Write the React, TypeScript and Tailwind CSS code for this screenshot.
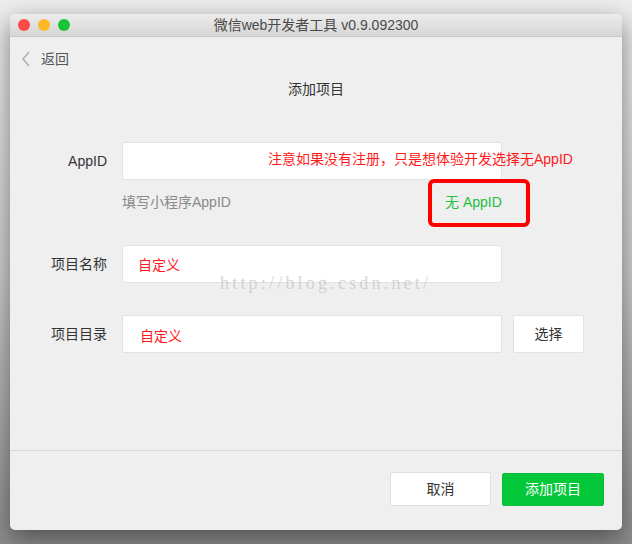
import React from "react";

const font = { fontFamily: '"Liberation Sans", "Noto Sans CJK SC", sans-serif' };

export default function App() {
  return (
    <div
      className="w-[632px] h-[544px] overflow-hidden bg-gradient-to-b from-[#ededed] via-[#cdcdcd] to-[#8c8c8c] pt-[14px] pl-[10px]"
      style={font}
    >
      <div className="w-[612px] h-[516px] rounded-[5px] bg-[#efefef] flex flex-col overflow-hidden shadow-[0_8px_24px_rgba(0,0,0,0.45)] relative">
        {/* title bar */}
        <div className="h-[23px] bg-gradient-to-b from-[#ececec] to-[#d6d6d6] border-b border-[#c8c8c8] flex items-center relative shrink-0">
          <div className="flex items-center gap-[8px] pl-[8px]">
            <span className="w-[12px] h-[12px] rounded-full bg-[#fc4a48]" />
            <span className="w-[12px] h-[12px] rounded-full bg-[#fdb826]" />
            <span className="w-[12px] h-[12px] rounded-full bg-[#1ac437]" />
          </div>
          <div className="absolute inset-0 flex items-center justify-center text-[14px] text-[#4a4a4a]">
            微信web开发者工具 v0.9.092300
          </div>
        </div>

        {/* content */}
        <div className="flex-1 flex flex-col relative">
          <div className="h-[44px] flex items-center pl-[11px] text-[14px] text-[#555]">
            <svg width="10" height="16" viewBox="0 0 10 16" className="mr-[10px]">
              <path d="M8 1 L2 8 L8 15" fill="none" stroke="#a8a8a8" strokeWidth="1.3" />
            </svg>
            返回
          </div>
          <div className="h-[16px] leading-[16px] text-center text-[14px] text-[#333]">添加项目</div>

          {/* AppID */}
          <div className="mt-[45px] flex items-center">
            <div className="w-[97px] text-right text-[14px] text-[#333]">AppID</div>
            <div className="ml-[15px] w-[380px] h-[38px] bg-white border border-[#e2e2e2] rounded-[2px] relative">
              <span className="absolute left-[145px] top-[6px] whitespace-nowrap text-[14px] text-[#ff1a1a]">
                注意如果没有注册，只是想体验开发选择无AppID
              </span>
            </div>
          </div>
          <div className="mt-[12px] flex">
            <div className="w-[97px]" />
            <div className="ml-[15px] w-[380px] h-[20px] flex items-center text-[14px] relative">
              <span className="text-[#8a8a8a]">填写小程序AppID</span>
              <span className="absolute left-[323px] text-[#22c03a]">无 AppID</span>
              <span className="absolute left-[306px] top-[-13px] w-[102px] h-[48px] border-[4px] border-[#ff0000] rounded-[6px]" />
            </div>
          </div>

          {/* name */}
          <div className="mt-[33px] flex items-center">
            <div className="w-[97px] text-right text-[14px] text-[#333]">项目名称</div>
            <div className="ml-[15px] w-[380px] h-[38px] bg-white border border-[#e2e2e2] rounded-[2px] flex items-center pl-[15px] pt-[3px] text-[14px] text-[#ff1a1a]">
              自定义
            </div>
          </div>

          {/* dir */}
          <div className="mt-[32px] flex items-center">
            <div className="w-[97px] text-right text-[14px] text-[#333]">项目目录</div>
            <div className="ml-[15px] w-[380px] h-[38px] bg-white border border-[#e2e2e2] rounded-[2px] flex items-center pl-[17px] pt-[5px] text-[14px] text-[#ff1a1a]">
              自定义
            </div>
            <div className="ml-[11px] w-[71px] h-[38px] bg-white border border-[#e2e2e2] rounded-[2px] flex items-center justify-center text-[14px] text-[#333]">
              选择
            </div>
          </div>

          <div
            className="absolute left-[210px] top-[233px] text-[18px] leading-[27px] tracking-[3.2px] text-[#c4c4c4]/70 whitespace-nowrap"
            style={{ fontFamily: '"Liberation Serif", serif' }}
          >
            http://blog.csdn.net/
          </div>
        </div>

        {/* footer */}
        <div className="h-[80px] shrink-0 border-t border-[#d8d8d8] flex justify-end pt-[21px] pr-[18px] gap-[11px]">
          <div className="w-[101px] h-[34px] bg-white border border-[#e0e0e0] rounded-[2px] flex items-center justify-center text-[14px] text-[#333]">
            取消
          </div>
          <div className="w-[102px] h-[33px] mt-[1px] bg-[#03c83a] border border-[#0bba3b] rounded-[2px] flex items-center justify-center text-[14px] text-white">
            添加项目
          </div>
        </div>
      </div>
    </div>
  );
}
